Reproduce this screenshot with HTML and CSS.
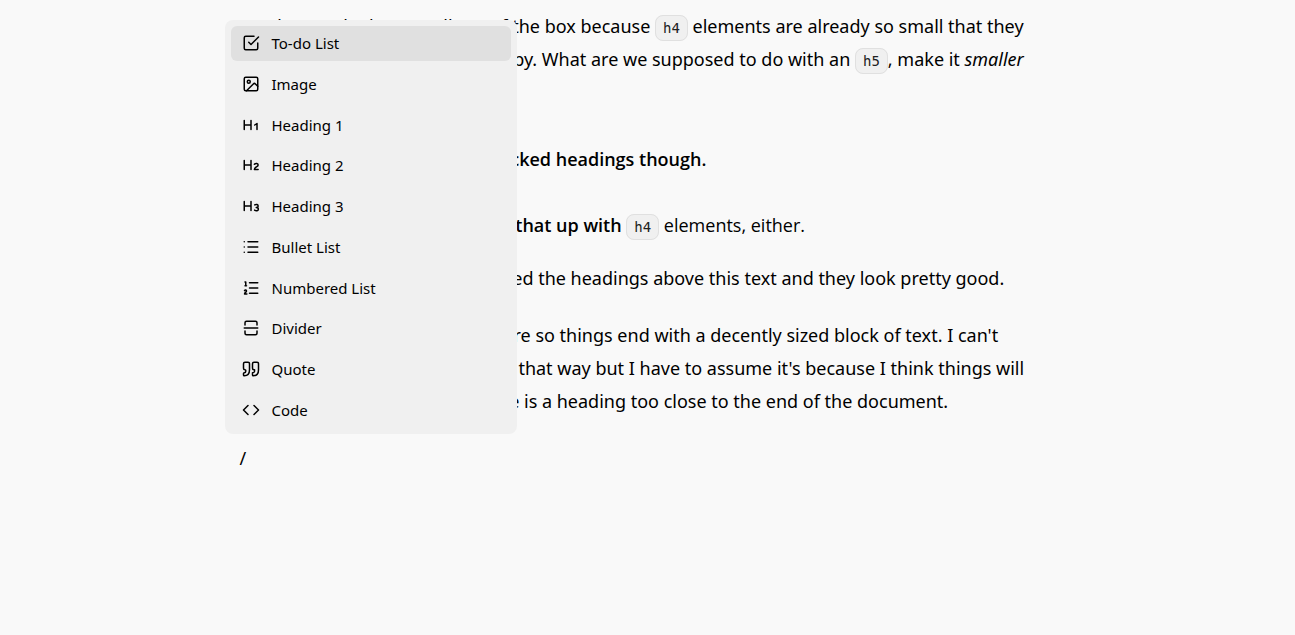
FILE: index.html
```
<!DOCTYPE html>
<html lang="en">
<head>
<meta charset="utf-8">
<title>Editor</title>
<link rel="stylesheet" href="styles.css">
</head>
<body>
<main class="editor">
<article class="prose">
<p class="first">We don't style them at all out of the box because <code>h4</code> elements are already so small that they<br>are the same size as the body copy. What are we supposed to do with an <code>h5</code>, make it <em>smaller</em><br>than the body copy? No thanks.</p>
<h3>We still need to think about stacked headings though.</h3>
<h4>Let's make sure we don't screw that up with <code>h4</code> <span class="regular">elements, either.</span></h4>
<p>Phew, with any luck we have styled the headings above this text and they look pretty good.</p>
<p>Let's add a closing paragraph here so things end with a decently sized block of text. I can't<br>explain why I want things to end that way but I have to assume it's because I think things will<br>look weird or unbalanced if there is a heading too close to the end of the document.</p>
<p>/</p>
</article>
<div class="menu">
<button class="item selected" type="button"><svg class="icon" viewBox="0 0 24 24"><path d="m9 11 3 3L22 4"/><path d="M21 12v7a2 2 0 0 1-2 2H5a2 2 0 0 1-2-2V5a2 2 0 0 1 2-2h11"/></svg>To-do List</button>
<button class="item" type="button"><svg class="icon" viewBox="0 0 24 24"><rect x="3" y="3" width="18" height="18" rx="2"/><circle cx="9" cy="9" r="2"/><path d="m21 15-3.1-3.1a2 2 0 0 0-2.8 0L6 21"/></svg>Image</button>
<button class="item" type="button"><svg class="icon" viewBox="0 0 24 24"><path d="M3 6v12M12 6v12M3 12h9M17 12l3-2v8"/></svg>Heading 1</button>
<button class="item" type="button"><svg class="icon" viewBox="0 0 24 24"><path d="M3 6v12M12 6v12M3 12h9M21.500 18h-5c0-4 5-3 5-6 0-2.200-3-2.800-5-1"/></svg>Heading 2</button>
<button class="item" type="button"><svg class="icon" viewBox="0 0 24 24"><path d="M3 6v12M12 6v12M3 12h9M17 10.500c2-1.200 4.500-.5 4.500 1.500a2 2 0 0 1-2.500 2c1.500 0 2.800.8 2.800 2.200 0 2.300-3 2.800-5 1.300"/></svg>Heading 3</button>
<button class="item" type="button"><svg class="icon" viewBox="0 0 24 24"><path d="M8 5h13M8 12h13M8 19h13M3 5h.01M3 12h.01M3 19h.01"/></svg>Bullet List</button>
<button class="item" type="button"><svg class="icon" viewBox="0 0 24 24"><path d="M10 5h11M10 12h11M10 19h11M4 4h1v5M4 9h2M6.500 20H3.400c0-2 2.600-2.200 2.600-4 0-1.500-2-1.600-2.600-.5"/></svg>Numbered List</button>
<button class="item" type="button"><svg class="icon" viewBox="0 0 24 24"><path d="M4 8V5c0-1 1-2 2-2h12c1 0 2 1 2 2v3M4 16v3c0 1 1 2 2 2h12c1 0 2-1 2-2v-3M3 12h18"/></svg>Divider</button>
<button class="item" type="button"><svg class="icon" viewBox="0 0 24 24"><path d="M3 21c3 0 7-1 7-8V5c0-1.250-.756-2.017-2-2H4c-1.250 0-2 .75-2 1.972V11c0 1.250.75 2 2 2 1 0 1 0 1 1v1c0 1-1 2-2 2s-1 .008-1 1.031V20c0 1 0 1 1 1z"/><path d="M15 21c3 0 7-1 7-8V5c0-1.250-.757-2.017-2-2h-4c-1.250 0-2 .75-2 1.972V11c0 1.250.75 2 2 2h.75c0 2.250.25 4-2.750 4v3c0 1 0 1 1 1z"/></svg>Quote</button>
<button class="item" type="button"><svg class="icon" viewBox="0 0 24 24"><path d="m16 18 6-6-6-6M8 6l-6 6 6 6"/></svg>Code</button>
</div>
</main>
</body>
</html>
```
FILE: styles.css
```
* { box-sizing: border-box; }
body {
  margin: 0;
  min-height: 100vh;
  background: #f9f9f9;
  color: #000;
  font-family: "Noto Sans", "Open Sans", sans-serif;
}
.editor {
  position: relative;
  max-width: 846px;
  margin: 0 auto;
  padding: 10px 15px 0;
}
.prose { font-size: 18px; line-height: 33px; white-space: nowrap; }
.prose p { margin: 0 0 24px; }
.prose .first { margin-bottom: 34px; }
.prose h3, .prose h4 {
  margin: 0;
  font-family: "Open Sans", sans-serif;
  font-size: 18px;
  font-weight: 600;
}
.prose h3 { margin-bottom: 33px; }
.prose h4 { margin-bottom: 20px; }
.regular { font-weight: 400; }
code {
  padding: 4px 7px;
  border: 1px solid #e0e0e0;
  border-radius: 8px;
  background: #f0f0f0;
  color: #202020;
  font-family: "DejaVu Sans Mono", monospace;
  font-size: 14px;
  font-weight: 400;
  line-height: 16px;
}
.menu {
  position: absolute;
  top: 20px;
  left: 0;
  display: flex;
  flex-direction: column;
  justify-content: space-between;
  width: 292px;
  height: 414px;
  padding: 6px;
  border-radius: 8px;
  background: #f0f0f0;
}
.item {
  display: flex;
  align-items: center;
  gap: 12px;
  height: 35px;
  padding: 0 11px 1px;
  border: 0;
  border-radius: 6px;
  background: transparent;
  color: #000;
  font: 15px/20px "Noto Sans", sans-serif;
  text-align: left;
}
.selected { background: #e0e0e0; }
.icon {
  width: 18px;
  height: 18px;
  fill: none;
  stroke: currentColor;
  stroke-width: 2;
  stroke-linecap: round;
  stroke-linejoin: round;
}
```
